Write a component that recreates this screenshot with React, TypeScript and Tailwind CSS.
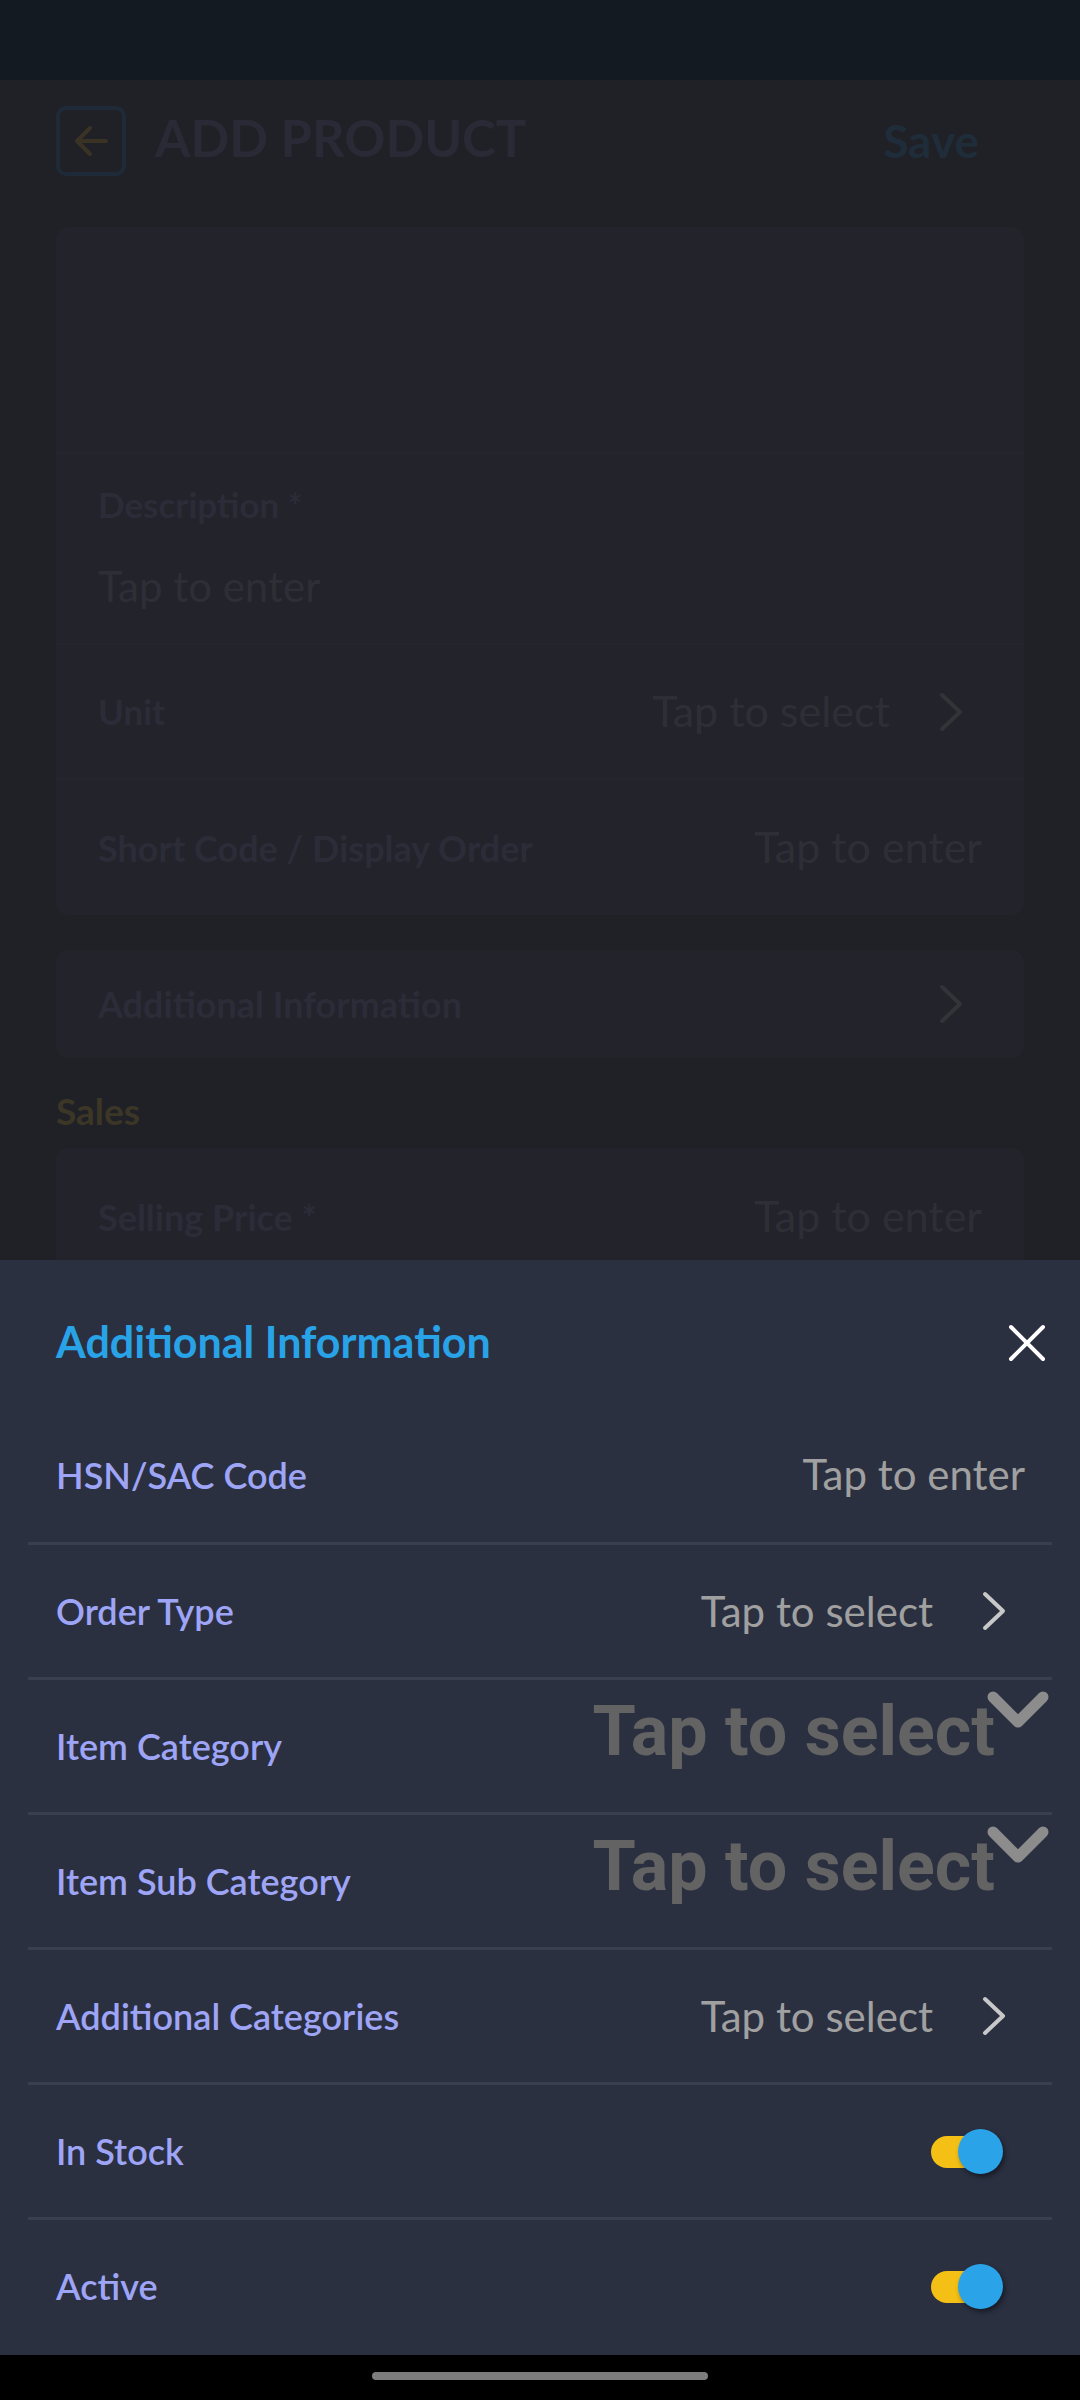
import React from "react"

const rows = [
  { label: "HSN/SAC Code", kind: "enter" },
  { label: "Order Type", kind: "select" },
  { label: "Item Category", kind: "dropdown" },
  { label: "Item Sub Category", kind: "dropdown" },
  { label: "Additional Categories", kind: "select" },
  { label: "In Stock", kind: "toggle" },
  { label: "Active", kind: "toggle" },
]

function ChevronRight({ color }: { color: string }) {
  return (
    <svg width="26" height="40" viewBox="0 0 26 40" fill="none">
      <path d="M4 3L22 20L4 37" stroke={color} strokeWidth="4" strokeLinecap="round" strokeLinejoin="round" />
    </svg>
  )
}

function ChevronDown() {
  return (
    <svg width="62" height="40" viewBox="0 0 62 40" fill="none">
      <path d="M6 7L31 32L56 7" stroke="#8c8c8c" strokeWidth="11" strokeLinecap="round" strokeLinejoin="round" />
    </svg>
  )
}

function Toggle() {
  return (
    <div className="relative w-[72px] h-[45px] mr-[49px]">
      <div className="absolute left-0 top-[7px] w-[52px] h-[32px] rounded-full bg-[#f4c015]" />
      <div className="absolute right-0 top-0 w-[45px] h-[45px] rounded-full bg-[#2aa3e9] shadow-[2px_3px_5px_rgba(0,0,0,0.45)]" />
    </div>
  )
}

function SheetRow({ label, kind, first }: { label: string; kind: string; first: boolean }) {
  return (
    <div
      className={`h-[135px] flex items-center justify-between pl-[28px] ${first ? "" : "border-t-[3px] border-[#3a3f4f]"
        }`}
    >
      <span className="text-[36px] font-semibold text-[#9ea5f6]">{label}</span>
      {kind === "enter" && <span className="text-[42px] text-[#a0a0a0] mr-[27px]">Tap to enter</span>}
      {kind === "select" && (
        <div className="flex items-center gap-[48px] mr-[45px]">
          <span className="text-[42px] text-[#a0a0a0]">Tap to select</span>
          <ChevronRight color="#c8c8c8" />
        </div>
      )}
      {kind === "dropdown" && (
        <div className="self-stretch flex items-start mr-[3px]">
          <span className="mt-[16px] leading-none font-['Roboto',sans-serif] font-bold text-[70px] text-[#636363]">
            Tap to select
          </span>
          <div className="mt-[10px] -ml-[8px]">
            <ChevronDown />
          </div>
        </div>
      )}
      {kind === "toggle" && <Toggle />}
    </div>
  )
}

export default function App() {
  return (
    <div className="w-[1080px] h-[2400px] flex flex-col overflow-hidden bg-[#202126] font-['Lato',sans-serif]">
      {/* status bar */}
      <div className="h-[80px] shrink-0 bg-[#141a22]" />

      {/* dimmed page behind the sheet */}
      <div className="h-[1180px] shrink-0 overflow-hidden px-[56px]">
        <div className="h-[147px] flex items-start pt-[26px]">
          <div className="w-[70px] h-[70px] rounded-[10px] border-[4px] border-[#1e2a37] flex items-center justify-center">
            <svg width="36" height="36" viewBox="0 0 36 36" fill="none">
              <path d="M33 18H5M17 5L4 18L17 31" stroke="#3a3325" strokeWidth="4" strokeLinecap="round" strokeLinejoin="round" />
            </svg>
          </div>
          <span className="ml-[29px] mt-[6px] text-[51px] leading-none font-bold text-[#2a2a37]">ADD PRODUCT</span>
          <span className="ml-auto mr-[45px] mt-[12px] text-[46px] leading-none font-bold text-[#1f2c3a]">Save</span>
        </div>

        <div className="rounded-[12px] bg-[#22232b] overflow-hidden">
          <div className="h-[225px]" />
          <div className="h-[191px] border-t-[2px] border-[#25262d] px-[42px] pt-[24px]">
            <div className="text-[35px] font-bold text-[#2b2c38]">Description *</div>
            <div className="mt-[24px] text-[42px] text-[#2e2f36]">Tap to enter</div>
          </div>
          <div className="h-[135px] border-t-[2px] border-[#25262d] px-[42px] flex items-center justify-between">
            <span className="text-[35px] font-bold text-[#2b2c38]">Unit</span>
            <div className="flex items-center gap-[48px] mr-[18px]">
              <span className="text-[43px] text-[#2e2f36]">Tap to select</span>
              <ChevronRight color="#333438" />
            </div>
          </div>
          <div className="h-[137px] border-t-[2px] border-[#25262d] px-[42px] flex items-center justify-between">
            <span className="text-[36px] font-bold text-[#2b2c38]">Short Code / Display Order</span>
            <span className="text-[43px] text-[#2e2f36]">Tap to enter</span>
          </div>
        </div>

        <div className="mt-[35px] h-[108px] rounded-[12px] bg-[#22232b] px-[42px] flex items-center justify-between">
          <span className="text-[36px] font-bold text-[#2b2c38]">Additional Information</span>
          <div className="mr-[18px]">
            <ChevronRight color="#333438" />
          </div>
        </div>

        <div className="h-[90px] pt-[34px] text-[37px] leading-none font-bold text-[#3b3626]">Sales</div>

        <div className="h-[137px] rounded-[12px] bg-[#22232b] px-[42px] flex items-center justify-between">
          <span className="text-[36px] font-bold text-[#2b2c38]">Selling Price *</span>
          <span className="text-[43px] text-[#2e2f36]">Tap to enter</span>
        </div>
      </div>

      {/* bottom sheet */}
      <div className="flex-1 bg-[#2b3041] px-[28px]">
        <div className="h-[147px] flex items-center justify-between pl-[28px] pt-[18px]">
          <span className="text-[43px] font-bold text-[#29a3e7]">Additional Information</span>
          <svg className="mr-[6px]" width="38" height="38" viewBox="0 0 38 38" fill="none">
            <path d="M3 3L35 35M35 3L3 35" stroke="#ffffff" strokeWidth="4" strokeLinecap="round" />
          </svg>
        </div>
        {rows.map((r, i) => (
          <SheetRow key={r.label} label={r.label} kind={r.kind} first={i === 0} />
        ))}
      </div>

      {/* navigation bar */}
      <div className="h-[45px] shrink-0 bg-black flex justify-center pt-[17px]">
        <div className="w-[336px] h-[8px] rounded-full bg-[#7c7c7c]" />
      </div>
    </div>
  )
}
